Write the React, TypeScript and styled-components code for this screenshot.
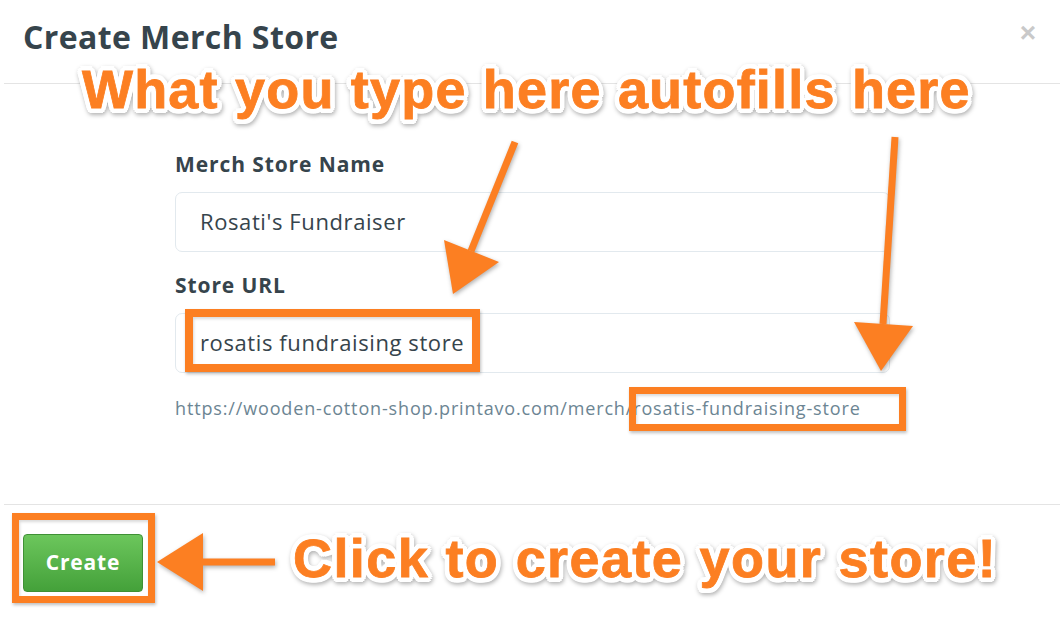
import React from 'react';
import styled, { createGlobalStyle } from 'styled-components';

const GlobalStyle = createGlobalStyle`
  html, body {
    margin: 0;
    padding: 0;
    background: #ffffff;
  }
  body {
    font-family: "Open Sans", Lato, Arial, sans-serif;
    overflow: hidden;
  }
`;

const ORANGE = '#fc7f22';
const INK = '#36444c';

const Page = styled.div`
  position: relative;
  width: 1060px;
  height: 639px;
  overflow: hidden;
  background: #fff;
`;

const Modal = styled.div`
  margin-left: 4px;
  width: 1056px;
  display: flex;
  flex-direction: column;
`;

const Header = styled.div`
  height: 84px;
  box-sizing: border-box;
  border-bottom: 1px solid #e4e4e4;
  padding: 16px 24px 0 19px;
  display: flex;
  justify-content: space-between;
  align-items: flex-start;
`;

const Title = styled.h2`
  margin: 0;
  font-size: 32px;
  line-height: 42px;
  font-weight: 700;
  letter-spacing: 0.4px;
  color: ${INK};
`;

const Close = styled.span`
  font-family: "Liberation Sans", Arial, sans-serif;
  font-size: 28px;
  line-height: 30px;
  color: #c9c9c9;
  font-weight: 700;
  margin-top: 2px;
`;

const Body = styled.div`
  height: 420px;
  box-sizing: border-box;
  padding: 67px 0 0 171px;
  display: flex;
  flex-direction: column;
`;

const Label = styled.label`
  font-size: 21px;
  line-height: 27px;
  font-weight: 700;
  letter-spacing: 0.9px;
  color: ${INK};
  margin-bottom: 14px;
`;

const Input = styled.div<{ $gap?: number }>`
  width: 715px;
  height: 60px;
  box-sizing: border-box;
  border: 1px solid #e2e9ee;
  border-radius: 7px;
  display: flex;
  align-items: center;
  padding: 0 0 3px 24px;
  font-size: 22px;
  letter-spacing: 0.6px;
  color: ${INK};
  margin-bottom: ${(p) => p.$gap ?? 0}px;
`;

const UrlHint = styled.div`
  font-size: 18px;
  line-height: 22px;
  letter-spacing: 0.85px;
  color: #6c8593;
`;

const Footer = styled.div`
  border-top: 1px solid #e4e4e4;
  padding: 29px 0 0 19px;
  flex: 1;
`;

const CreateButton = styled.button`
  width: 120px;
  height: 58px;
  padding: 0 0 2px;
  border: 1px solid #3f9035;
  border-radius: 4px;
  background: linear-gradient(#6cc65c, #44a13a);
  color: #fff;
  font-family: "Open Sans", Lato, Arial, sans-serif;
  font-size: 21px;
  font-weight: 700;
  letter-spacing: 0.8px;
  cursor: pointer;
`;

/* annotation layer */

const Callout = styled.div<{ $x: number; $y: number; $ls?: number }>`
  position: absolute;
  left: ${(p) => p.$x}px;
  top: ${(p) => p.$y}px;
  white-space: nowrap;
  font-family: "Liberation Sans", Arial, sans-serif;
  font-weight: 700;
  font-size: 54px;
  line-height: 1;
  letter-spacing: ${(p) => p.$ls ?? 1.2}px;
  color: ${ORANGE};
  -webkit-text-stroke: 0.8px ${ORANGE};
  text-shadow:
    5px 0 0 #fff, -5px 0 0 #fff, 0 5px 0 #fff, 0 -5px 0 #fff,
    3.5px 3.5px 0 #fff, -3.5px 3.5px 0 #fff, 3.5px -3.5px 0 #fff, -3.5px -3.5px 0 #fff,
    4.6px 2px 0 #fff, -4.6px 2px 0 #fff, 4.6px -2px 0 #fff, -4.6px -2px 0 #fff,
    2px 4.6px 0 #fff, -2px 4.6px 0 #fff, 2px -4.6px 0 #fff, -2px -4.6px 0 #fff;
  filter: drop-shadow(1px 2px 2px rgba(0, 0, 0, 0.3));
`;

const Highlight = styled.div<{ $x: number; $y: number; $w: number; $h: number; $b?: number }>`
  position: absolute;
  left: ${(p) => p.$x}px;
  top: ${(p) => p.$y}px;
  width: ${(p) => p.$w}px;
  height: ${(p) => p.$h}px;
  box-sizing: border-box;
  border: ${(p) => p.$b ?? 7}px solid ${ORANGE};
  box-shadow: 1px 2px 3px rgba(0, 0, 0, 0.25), inset 1px 2px 3px rgba(0, 0, 0, 0.15);
`;

const ArrowLayer = styled.svg`
  position: absolute;
  left: 0;
  top: 0;
  pointer-events: none;
  filter: drop-shadow(1px 2px 2px rgba(0, 0, 0, 0.3));
`;

const arrows = [
  { from: [515, 142], to: [471, 251], head: '444,240 499,262 453,294' },
  { from: [895, 137], to: [883, 324], head: '854,322 913,326 881,371' },
  { from: [275, 562], to: [202, 562], head: '203,533 203,591 157,562' },
];

export default function App() {
  return (
    <Page>
      <GlobalStyle />
      <Modal>
        <Header>
          <Title>Create Merch Store</Title>
          <Close>×</Close>
        </Header>
        <Body>
          <Label>Merch Store Name</Label>
          <Input $gap={20}>Rosati's Fundraiser</Input>
          <Label>Store URL</Label>
          <Input $gap={24}>rosatis fundraising store</Input>
          <UrlHint>https://wooden-cotton-shop.printavo.com/merch/rosatis-fundraising-store</UrlHint>
        </Body>
        <Footer>
          <CreateButton>Create</CreateButton>
        </Footer>
      </Modal>

      <Highlight $x={185} $y={309} $w={295} $h={63} $b={8} />
      <Highlight $x={629} $y={387} $w={277} $h={44} />
      <Highlight $x={12} $y={513} $w={143} $h={90} />

      <ArrowLayer width={1060} height={639} viewBox="0 0 1060 639">
        {arrows.map((a, i) => (
          <g key={i} fill={ORANGE} stroke={ORANGE}>
            <line x1={a.from[0]} y1={a.from[1]} x2={a.to[0]} y2={a.to[1]} strokeWidth={7} />
            <polygon points={a.head} strokeWidth={0} />
          </g>
        ))}
      </ArrowLayer>

      <Callout $x={82} $y={62}>What you type here autofills here</Callout>
      <Callout $x={293} $y={531} $ls={1.4}>Click to create your store!</Callout>
    </Page>
  );
}
